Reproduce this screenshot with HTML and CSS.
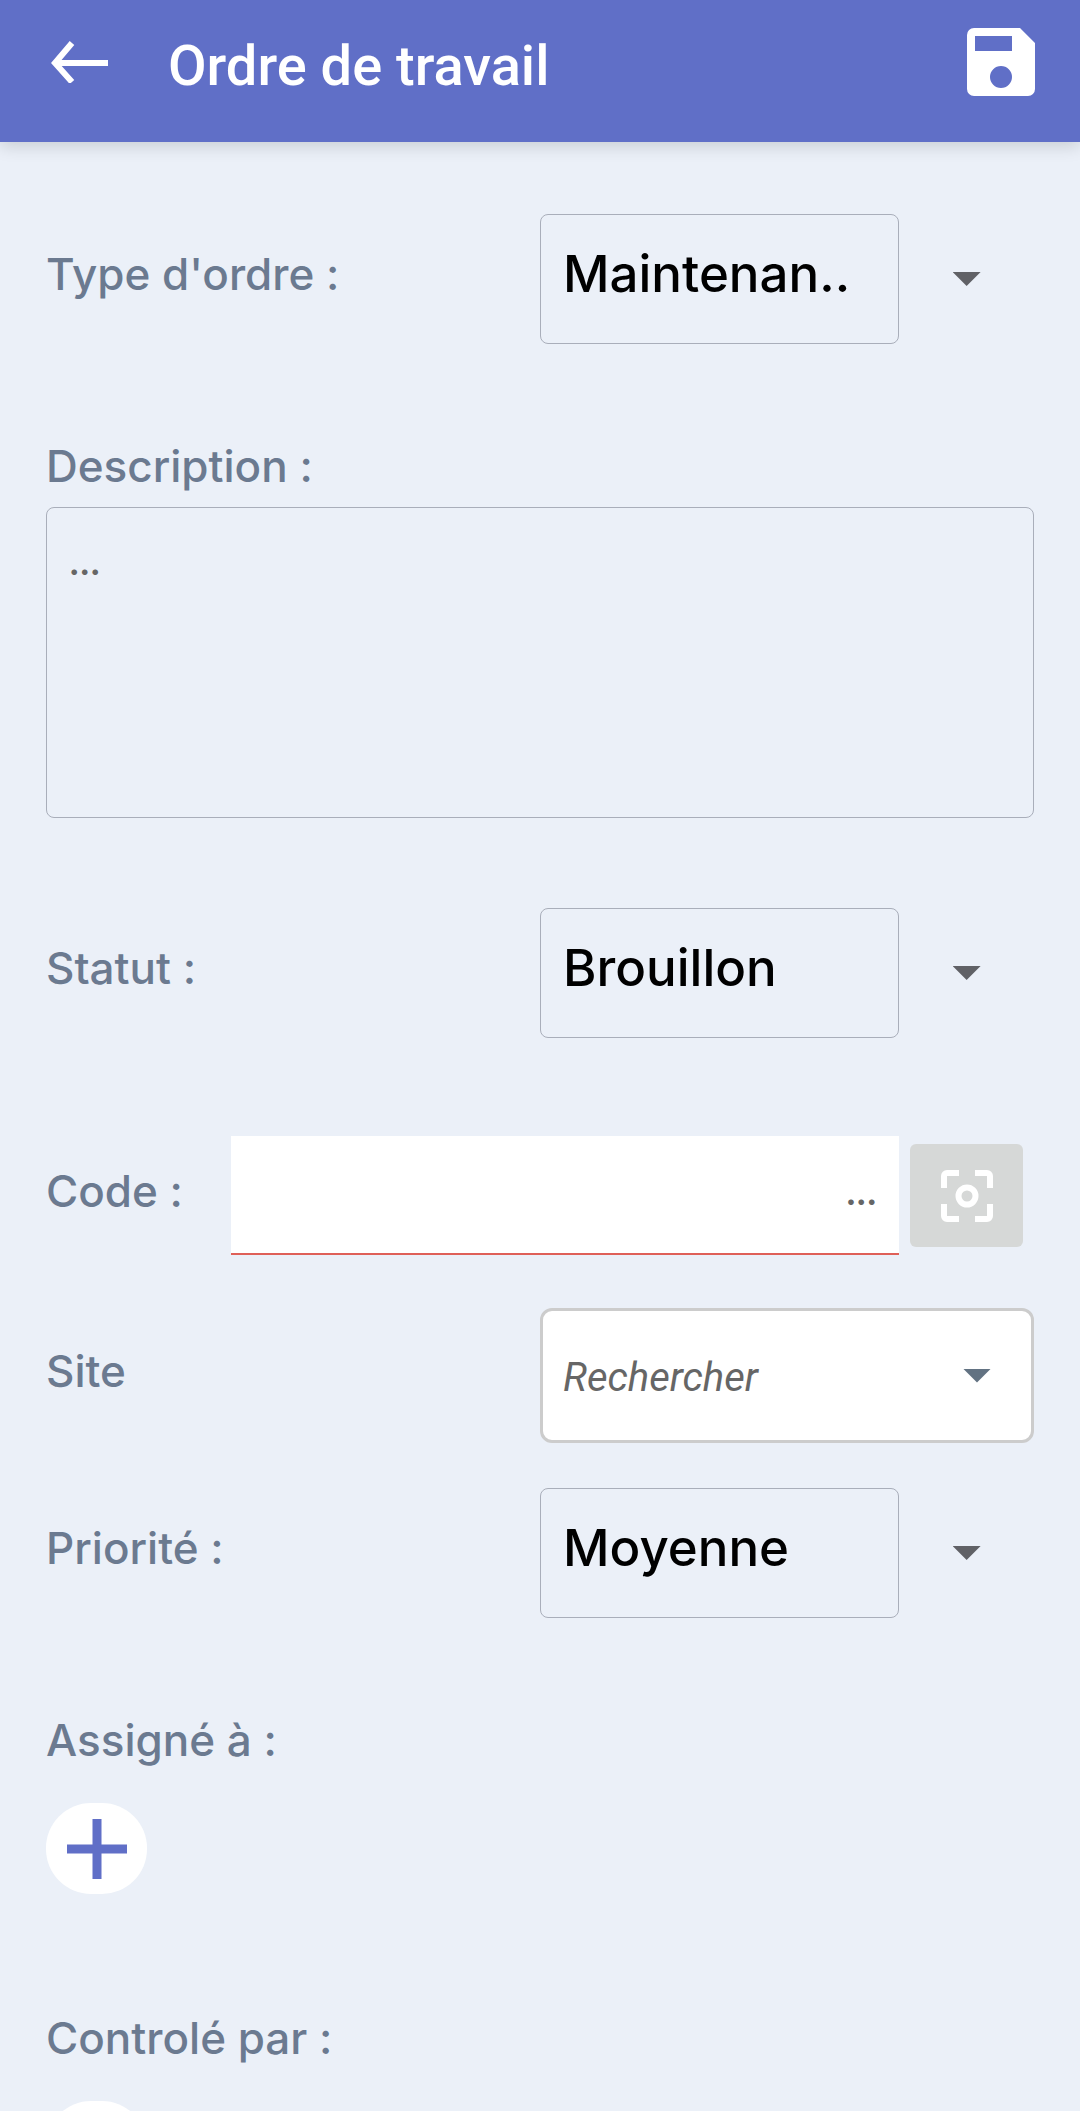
FILE: index.html
```html
<!DOCTYPE html>
<html lang="fr">
<head>
    <title>Ordre de travail</title>
    <meta name="viewport" content="width=device-width, initial-scale=1.0">
    <meta charset="utf-8">
    <link rel="stylesheet" href="styles.css">
</head>

<body>
    <header class="toolbar">
        <a class="back" href="#" aria-label="Retour">
            <svg width="58" height="42" viewBox="0 0 58 42"><path d="M58 22H5M22 2L5 22L22 41" fill="none" stroke="#fff" stroke-width="6"/></svg>
        </a>
        <h1>Ordre de travail</h1>
        <button class="save" type="submit" form="order" aria-label="Enregistrer">
            <svg width="68" height="68" viewBox="0 0 68 68"><path fill="#fff" fill-rule="evenodd" d="M7 0H53L68 15V61A7 7 0 0 1 61 68H7A7 7 0 0 1 0 61V7A7 7 0 0 1 7 0ZM8 8V23H45V8ZM34 38A11 11 0 1 0 34 60A11 11 0 1 0 34 38Z"/></svg>
        </button>
    </header>

    <form class="content" id="order">
        <div class="row">
            <label for="type">Type d'ordre :</label>
            <div class="picker">
                <select id="type">
                    <option>Maintenan..</option>
                </select>
                <span class="arrow"></span>
            </div>
        </div>

        <div class="block description">
            <label for="description">Description :</label>
            <textarea id="description" placeholder="..."></textarea>
        </div>

        <div class="row status">
            <label for="status">Statut :</label>
            <div class="picker">
                <select id="status">
                    <option>Brouillon</option>
                </select>
                <span class="arrow"></span>
            </div>
        </div>

        <div class="row code">
            <label for="code">Code :</label>
            <input type="text" id="code" placeholder="...">
            <button class="scan" type="button" aria-label="Scanner">
                <svg width="52" height="52" viewBox="0 0 52 52" fill="none" stroke="#fff" stroke-width="6"><path d="M3 18V6A3 3 0 0 1 6 3H18M34 3H46A3 3 0 0 1 49 6V18M49 34V46A3 3 0 0 1 46 49H34M18 49H6A3 3 0 0 1 3 46V34"/><circle cx="26" cy="26" r="8.5"/></svg>
            </button>
        </div>

        <div class="row site">
            <label for="site">Site</label>
            <div class="search">
                <input type="text" id="site" placeholder="Rechercher">
                <span class="arrow"></span>
            </div>
        </div>

        <div class="row priority">
            <label for="priority">Priorité :</label>
            <div class="picker">
                <select id="priority">
                    <option>Moyenne</option>
                </select>
                <span class="arrow"></span>
            </div>
        </div>

        <div class="block assigned">
            <label for="assign">Assigné à :</label>
            <button class="add" id="assign" type="button">
                <svg width="60" height="60" viewBox="0 0 60 60"><path d="M30 0V60M0 30H60" stroke="#606fc7" stroke-width="9"/></svg>
            </button>
        </div>

        <div class="block checked">
            <label for="check">Controlé par :</label>
            <button class="add" id="check" type="button">
                <svg width="60" height="60" viewBox="0 0 60 60"><path d="M30 0V60M0 30H60" stroke="#606fc7" stroke-width="9"/></svg>
            </button>
        </div>
    </form>
</body>
</html>
```
FILE: styles.css
```css
*{
    box-sizing: border-box;
}

body{
    display: flex;
    flex-direction: column;
    height: 100vh;
    margin: 0;
    background: #ebf0f8;
    font-family: Inter, "Open Sans", sans-serif;
}

svg{
    display: block;
}

button{
    display: flex;
    justify-content: center;
    align-items: center;
    padding: 0;
    border: none;
    background: transparent;
}

/* toolbar */
.toolbar{
    display: flex;
    align-items: center;
    flex-shrink: 0;
    height: 142px;
    padding: 0 45px 18px 50px;
    background: #606fc7;
    box-shadow: 0 4px 16px rgba(0, 0, 0, 0.15);
    z-index: 1;
}

.toolbar h1{
    flex: 1;
    margin: 0 0 0 60px;
    padding-top: 8px;
    color: #fff;
    font-family: Roboto, sans-serif;
    font-size: 56px;
    font-weight: 500;
    line-height: 64px;
}

/* form */
.content{
    flex: 1;
    padding: 72px 46px 0;
    overflow-y: auto;
    scrollbar-width: none;
}

label{
    color: #6b7a90;
    font-size: 44px;
    font-weight: 500;
    line-height: 60px;
}

.row{
    display: grid;
    grid-template-columns: minmax(0, 1fr) minmax(0, 1fr);
    align-items: center;
}

.row label{
    padding-bottom: 10px;
}

.block{
    display: flex;
    flex-direction: column;
    align-items: flex-start;
}

.description{
    margin: 92px 0 90px;
    gap: 11px;
}

.code{
    grid-template-columns: 185px 1fr 135px;
    margin-top: 98px;
}

.site{
    margin-top: 53px;
}

.priority{
    margin-top: 45px;
}

.assigned{
    margin-top: 92px;
    gap: 33px;
}

.checked{
    margin-top: 114px;
    gap: 33px;
}

.picker{
    display: grid;
    grid-template-columns: 8fr 3fr;
    align-items: center;
}

.picker select{
    appearance: none;
    width: 100%;
    height: 130px;
    padding: 0 22px 12px;
    border: 1px solid #a9aeba;
    border-radius: 8px;
    background: transparent;
    color: #000;
    font-family: inherit;
    font-size: 51px;
    font-weight: 500;
}

.arrow{
    justify-self: center;
    width: 28px;
    height: 14px;
    background: #606166;
    clip-path: polygon(0 0, 100% 0, 50% 100%);
}

textarea{
    display: block;
    width: 100%;
    height: 311px;
    padding: 40px 22px;
    border: 1px solid #a9aeba;
    border-radius: 8px;
    background: transparent;
    font-family: inherit;
    font-size: 28px;
    font-weight: 900;
    resize: none;
}

::placeholder{
    color: #666;
    opacity: 1;
}

.code input{
    width: 100%;
    height: 119px;
    padding: 0 22px;
    border: none;
    border-bottom: 2px solid #df6058;
    background: #fff;
    font-family: inherit;
    font-size: 28px;
    font-weight: 900;
    text-align: right;
}

.scan{
    justify-self: center;
    width: 113px;
    height: 103px;
    border-radius: 6px;
    background: #d6d8d7;
}

.search{
    display: flex;
    align-items: center;
    height: 135px;
    padding: 0 40px 0 20px;
    border: 3px solid #ccc;
    border-radius: 12px;
    background: #fff;
}

.search input{
    flex: 1;
    min-width: 0;
    padding: 4px 0 0;
    border: none;
    background: transparent;
    font-family: Roboto, sans-serif;
    font-size: 40px;
    font-style: italic;
}

.search .arrow{
    background: #627282;
}

.add{
    width: 101px;
    height: 91px;
    border-radius: 45px;
    background: #fff;
}
```
